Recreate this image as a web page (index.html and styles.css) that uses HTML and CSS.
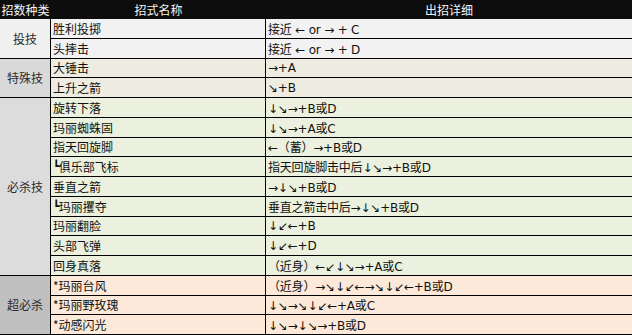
FILE: index.html
```html
<!DOCTYPE html>
<html lang="zh-CN">
<head>
<meta charset="utf-8">
<title>出招表</title>
<link rel="stylesheet" href="styles.css">
</head>
<body>
<div class="moves">
  <div class="hd">招数种类</div>
  <div class="hd">招式名称</div>
  <div class="hd">出招详细</div>

  <div class="cat c-throw" style="grid-row: span 2">投技</div>
  <div class="name r-throw">胜利投掷</div>
  <div class="cmd r-throw">接近 ← or → + C</div>
  <div class="name r-throw">头摔击</div>
  <div class="cmd r-throw">接近 ← or → + D</div>

  <div class="cat c-special" style="grid-row: span 2">特殊技</div>
  <div class="name r-special">大锤击</div>
  <div class="cmd r-special">→+A</div>
  <div class="name r-special">上升之箭</div>
  <div class="cmd r-special">↘+B</div>

  <div class="cat c-kill" style="grid-row: span 9">必杀技</div>
  <div class="name r-kill">旋转下落</div>
  <div class="cmd r-kill">↓↘→+B或D</div>
  <div class="name r-kill">玛丽蜘蛛固</div>
  <div class="cmd r-kill">↓↘→+A或C</div>
  <div class="name r-kill">指天回旋脚</div>
  <div class="cmd r-kill">←（蓄）→+B或D</div>
  <div class="name r-kill"><span class="sub">┗</span>俱乐部飞标</div>
  <div class="cmd r-kill">指天回旋脚击中后↓↘→+B或D</div>
  <div class="name r-kill">垂直之箭</div>
  <div class="cmd r-kill">→↓↘+B或D</div>
  <div class="name r-kill"><span class="sub">┗</span>玛丽攫夺</div>
  <div class="cmd r-kill">垂直之箭击中后→↓↘+B或D</div>
  <div class="name r-kill">玛丽翻脸</div>
  <div class="cmd r-kill">↓↙←+B</div>
  <div class="name r-kill">头部飞弹</div>
  <div class="cmd r-kill">↓↙←+D</div>
  <div class="name r-kill">回身真落</div>
  <div class="cmd r-kill">（近身）←↙↓↘→+A或C</div>

  <div class="cat c-super" style="grid-row: span 3">超必杀</div>
  <div class="name r-super">*玛丽台风</div>
  <div class="cmd r-super">（近身）→↘↓↙←→↘↓↙←+B或D</div>
  <div class="name r-super">*玛丽野玫瑰</div>
  <div class="cmd r-super">↓↘→↘↓↙←+A或C</div>
  <div class="name r-super">*动感闪光</div>
  <div class="cmd r-super">↓↘→↓↘→+B或D</div>
</div>
</body>
</html>
```

FILE: styles.css
```css
html, body {
  margin: 0;
  padding: 0;
  background: #ffffff;
}

body {
  width: 632px;
  height: 335px;
  overflow: hidden;
  font-family: "DejaVu Sans", "Noto Sans CJK SC", sans-serif;
  font-size: 12px;
  color: #111111;
}

.moves {
  display: grid;
  grid-template-columns: 51px 215px 1fr;
  grid-template-rows: 19px repeat(16, 19.75px);
  width: 632px;
}

.hd {
  background: #0d0d0d;
  color: #f4f4f4;
  font-family: "Noto Sans CJK SC", sans-serif;
  font-size: 12px;
  display: flex;
  align-items: center;
  justify-content: center;
  white-space: nowrap;
  overflow: hidden;
}

.cat,
.name,
.cmd {
  display: flex;
  align-items: center;
  white-space: nowrap;
  overflow: hidden;
  border-bottom: 1px solid #000000;
  box-sizing: border-box;
}

.cat {
  justify-content: center;
  border-right: 1px solid #000000;
  font-family: "Noto Sans CJK SC", sans-serif;
  font-size: 12px;
  color: #2a2a2a;
}

.name {
  padding-left: 2px;
  border-right: 1px solid #000000;
  font-family: "Noto Sans CJK SC", sans-serif;
}

.cmd {
  padding-left: 2px;
  letter-spacing: -0.2px;
}

.sub {
  font-family: "DejaVu Sans", sans-serif;
  font-weight: bold;
  font-size: 11px;
  margin-right: -1px;
}

.c-throw { background: #f0f0f0; }
.c-special { background: #d9d9d9; }
.c-kill { background: #dcdcdc; }
.c-super { background: #c0c0c0; }

.r-throw { background: #f2f2f2; }
.r-special { background: #eeebe1; }
.r-kill { background: #ebf1de; }
.r-super { background: #fde9d9; }
```
